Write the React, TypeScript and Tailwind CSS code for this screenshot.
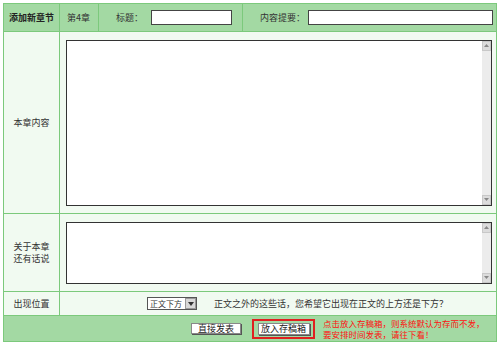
import React from 'react';

const cell = 'border border-[#7cc97c] align-middle';

const Arrow: React.FC<{ up?: boolean }> = ({ up }) => (
  <span className="flex h-[10px] w-[9px] items-center justify-center border border-[#c8c8c8] bg-[#dcdcdc]">
    <svg width="5" height="3" viewBox="0 0 5 3">
      <path d={up ? 'M0 3h5L2.5 0z' : 'M0 0h5L2.5 3z'} fill="#888" />
    </svg>
  </span>
);

const TextBox: React.FC<{ h: string }> = ({ h }) => (
  <div className={`flex w-[426px] border border-[#333] bg-white ${h}`}>
    <textarea className="h-full flex-1 resize-none bg-white outline-none" />
    <div className="flex w-[9px] flex-col justify-between bg-[#ececec]">
      <Arrow up />
      <Arrow />
    </div>
  </div>
);

const App: React.FC = () => {
  return (
    <div className="h-[345px] w-[500px] bg-white pl-[3px] pt-[3px] font-['Noto_Sans_CJK_SC',sans-serif] text-[9px] leading-[12px] text-[#333]">
      <table className="w-[494px] table-fixed border-collapse border border-[#7cc97c]">
        <colgroup>
          <col className="w-[56px]" />
          <col className="w-[39px]" />
          <col className="w-[144px]" />
          <col />
        </colgroup>
        <tbody>
          {/* Header */}
          <tr className="h-[28px] bg-[#a3d9a3]">
            <td className={`${cell} text-center font-bold text-[#222]`}>添加新章节</td>
            <td className={`${cell} pl-[7px]`}>第4章</td>
            <td className={cell}>
              <div className="flex items-center gap-[8px] pl-[17px]">
                <span>标题：</span>
                <input className="h-[15px] w-[81px] border border-[#444] bg-white" />
              </div>
            </td>
            <td className={cell}>
              <div className="flex items-center gap-[3px] pl-[17px]">
                <span>内容提要：</span>
                <input className="h-[15px] w-[185px] border border-[#444] bg-white" />
              </div>
            </td>
          </tr>

          {/* Content */}
          <tr className="h-[182px] bg-[#f1faf1]">
            <td className={`${cell} text-center`}>本章内容</td>
            <td className={cell} colSpan={3}>
              <div className="flex justify-center py-[7px] pl-[1px]">
                <TextBox h="h-[166px]" />
              </div>
            </td>
          </tr>

          {/* Afterword */}
          <tr className="h-[78px] bg-[#f1faf1]">
            <td className={`${cell} text-center`}>
              关于本章
              <br />
              还有话说
            </td>
            <td className={cell} colSpan={3}>
              <div className="flex justify-center py-[7px] pl-[1px]">
                <TextBox h="h-[62px]" />
              </div>
            </td>
          </tr>

          {/* Position */}
          <tr className="h-[24px] bg-[#f1faf1]">
            <td className={`${cell} text-center`}>出现位置</td>
            <td className={cell} colSpan={3}>
              <div className="flex items-center pl-[87px]">
                <div className="flex h-[13px] w-[50px] items-center border border-[#555] bg-white">
                  <span className="flex-1 whitespace-nowrap pl-[2px] text-[8px] leading-[11px]">正文下方</span>
                  <span className="flex h-[11px] w-[11px] shrink-0 items-center justify-center border border-[#999] bg-[#d8d8d8]">
                    <svg width="6" height="4" viewBox="0 0 6 4">
                      <path d="M0 0h6L3 4z" fill="#333" />
                    </svg>
                  </span>
                </div>
                <span className="ml-[17px]">正文之外的这些话，您希望它出现在正文的上方还是下方？</span>
              </div>
            </td>
          </tr>

          {/* Footer */}
          <tr className="h-[26px] bg-[#a3d9a3]">
            <td className={cell} colSpan={4}>
              <div className="flex items-center pl-[187px]">
                <button className="h-[11px] w-[50px] border border-[#888] bg-white text-[9px] leading-[9px] text-[#222] shadow-[1px_1px_0_#555]">
                  直接发表
                </button>
                <div className="ml-[11px] flex h-[20px] w-[63px] items-center justify-center border-2 border-[#e02020]">
                  <button className="h-[12px] w-[52px] border border-[#888] bg-white text-[9px] leading-[9px] text-[#222] shadow-[1px_1px_0_#555]">
                    放入存稿箱
                  </button>
                </div>
                <div className="ml-[8px] text-[8.5px] leading-[11px] text-[#ff1010]">
                  点击放入存稿箱，则系统默认为存而不发，
                  <br />
                  要安排时间发表，请往下看！
                </div>
              </div>
            </td>
          </tr>
        </tbody>
      </table>
    </div>
  );
};

export default App;
